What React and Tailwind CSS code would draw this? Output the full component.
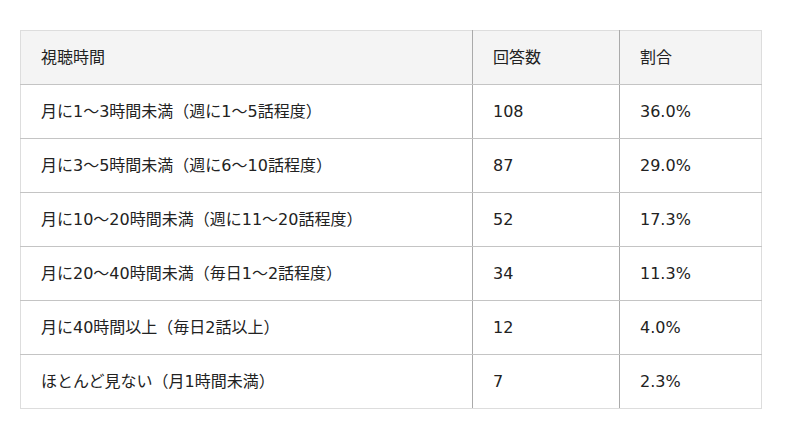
import React from 'react';

const rows = [
  ['月に1〜3時間未満（週に1〜5話程度）', '108', '36.0%'],
  ['月に3〜5時間未満（週に6〜10話程度）', '87', '29.0%'],
  ['月に10〜20時間未満（週に11〜20話程度）', '52', '17.3%'],
  ['月に20〜40時間未満（毎日1〜2話程度）', '34', '11.3%'],
  ['月に40時間以上（毎日2話以上）', '12', '4.0%'],
  ['ほとんど見ない（月1時間未満）', '7', '2.3%'],
];

export default function App() {
  return (
    <div
      className="w-[800px] h-[439px] bg-white pt-[30px] pl-[20px]"
      style={{ fontFamily: '"DejaVu Sans", "Noto Sans CJK JP", sans-serif' }}
    >
      <table className="w-[742px] border-collapse text-[16px] text-[#222]">
        <thead>
          <tr className="h-[54px] bg-[#f4f4f4]">
            <th className="w-[452px] border border-[#ddd] border-b-[#c4c4c4] border-r-[#aaa] px-5 text-left font-normal">視聴時間</th>
            <th className="w-[147px] border border-[#ddd] border-b-[#c4c4c4] border-r-[#aaa] px-5 text-left font-normal">回答数</th>
            <th className="border border-[#ddd] border-b-[#c4c4c4] px-5 text-left font-normal">割合</th>
          </tr>
        </thead>
        <tbody>
          {rows.map((r, i) => {
            const last = i === rows.length - 1;
            const b = last ? 'border-b-[#ddd]' : 'border-b-[#c4c4c4]';
            return (
              <tr key={i} className="h-[54px]">
                <td className={`border border-[#ddd] border-r-[#aaa] ${b} px-5`}>{r[0]}</td>
                <td className={`border border-[#ddd] border-r-[#aaa] ${b} px-5`}>{r[1]}</td>
                <td className={`border border-[#ddd] ${b} px-5`}>{r[2]}</td>
              </tr>
            );
          })}
        </tbody>
      </table>
    </div>
  );
}
